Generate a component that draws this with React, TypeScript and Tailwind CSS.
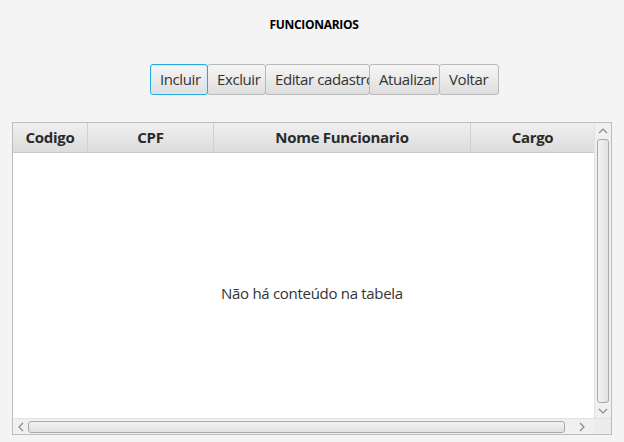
import React from "react";

const botoes = [
  { label: "Incluir", w: "w-[58px]", foco: true },
  { label: "Excluir", w: "w-[59px]" },
  { label: "Editar cadastro", w: "w-[105px]" },
  { label: "Atualizar", w: "w-[71px]" },
  { label: "Voltar", w: "w-[60px]" },
];

const colunas = [
  { label: "Codigo", w: "w-[75px]" },
  { label: "CPF", w: "w-[126px]" },
  { label: "Nome Funcionario", w: "w-[257px]" },
  { label: "Cargo", w: "w-[123px]" },
];

function Seta({ dir }: { dir: "up" | "down" | "left" | "right" }) {
  const d = {
    up: "M1 5 L5 1 L9 5",
    down: "M1 1 L5 5 L9 1",
    left: "M5 1 L1 5 L5 9",
    right: "M1 1 L5 5 L1 9",
  }[dir];
  const vertical = dir === "up" || dir === "down";
  return (
    <svg
      width={vertical ? 10 : 6}
      height={vertical ? 6 : 10}
      viewBox={vertical ? "0 0 10 6" : "0 0 6 10"}
      className="block"
    >
      <path d={d} fill="none" stroke="#8a8a8a" strokeWidth="1.2" />
    </svg>
  );
}

export default function App() {
  return (
    <div
      className="w-[624px] h-[442px] bg-[#f4f4f4] flex flex-col overflow-hidden text-[#333]"
      style={{ fontFamily: '"Open Sans", "Noto Sans", sans-serif' }}
    >
      {/* Titulo */}
      <div className="h-[50px] flex items-center justify-center pl-[4px]">
        <span className="text-[12px] font-bold text-black tracking-[-0.3px]">
          FUNCIONARIOS
        </span>
      </div>

      {/* Botoes */}
      <div className="flex justify-center pl-[25px] mt-[14px]">
        {botoes.map((b) => (
          <button
            key={b.label}
            className={`${b.w} h-[31px] -ml-px first:ml-0 overflow-hidden whitespace-nowrap text-[15px] text-[#333] rounded-[3px] bg-gradient-to-b from-[#f6f6f6] to-[#dedede] ${
              b.foco
                ? "relative z-10 border border-[#2aa9e0] shadow-[inset_0_0_0_1px_#cdebf8]"
                : "border border-[#b9b9b9]"
            }`}
          >
            <span className="block px-[9px] text-left tracking-[-0.4px]">{b.label}</span>
          </button>
        ))}
      </div>

      {/* Tabela */}
      <div className="ml-[12px] mt-[27px] w-[600px] h-[313px] border border-[#bdbdbd] bg-white flex flex-col">
        <div className="flex flex-1 min-h-0">
          <div className="flex-1 flex flex-col">
            <div className="flex h-[30px] bg-gradient-to-b from-[#f0f0f0] to-[#dcdcdc] border-b border-[#c8c8c8]">
              {colunas.map((c) => (
                <div
                  key={c.label}
                  className={`${c.w} flex items-center justify-center border-r border-[#d0d0d0] last:border-r-0 text-[15px] font-bold text-[#2a2a2a] tracking-[-0.3px]`}
                >
                  {c.label}
                </div>
              ))}
            </div>
            <div className="flex-1 flex items-center justify-center pl-[17px] pt-[16px]">
              <span className="text-[15px] text-[#333] tracking-[-0.3px]">
                Não há conteúdo na tabela
              </span>
            </div>
          </div>
          {/* scroll vertical */}
          <div className="w-[17px] bg-[#f0f0f0] border-l border-[#e2e2e2] flex flex-col items-center">
            <div className="h-[14px] flex items-center justify-center mt-[1px]">
              <Seta dir="up" />
            </div>
            <div className="flex-1 w-[12px] my-[1px] rounded-[3px] border border-[#a9a9a9] bg-gradient-to-r from-[#f3f3f3] to-[#e2e2e2]" />
            <div className="h-[14px] flex items-center justify-center">
              <Seta dir="down" />
            </div>
          </div>
        </div>
        {/* scroll horizontal */}
        <div className="h-[16px] flex bg-[#f0f0f0] border-t border-[#e2e2e2]">
          <div className="flex-1 flex items-center">
            <div className="w-[15px] flex justify-center">
              <Seta dir="left" />
            </div>
            <div className="w-[537px] h-[12px] rounded-[3px] border border-[#a9a9a9] bg-gradient-to-b from-[#f3f3f3] to-[#e0e0e0]" />
            <div className="flex-1 flex justify-center pl-[4px]">
              <Seta dir="right" />
            </div>
          </div>
          <div className="w-[17px] bg-[#ececec]" />
        </div>
      </div>
    </div>
  );
}
